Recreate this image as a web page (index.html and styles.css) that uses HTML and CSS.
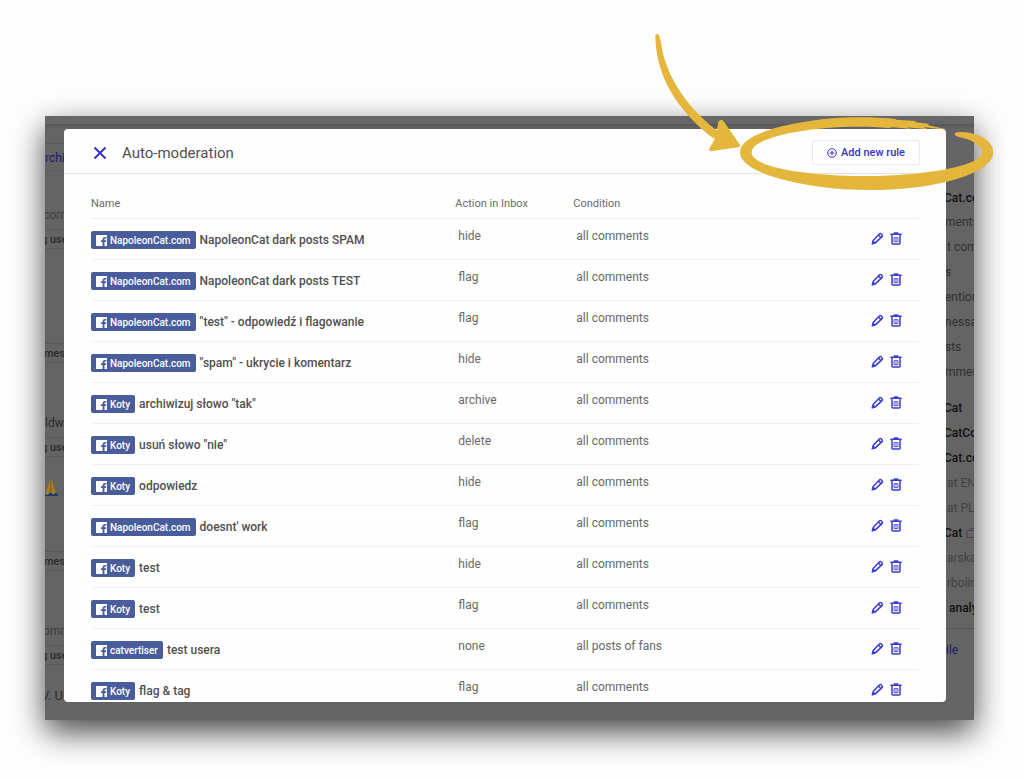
FILE: index.html
```html
<!DOCTYPE html>
<html lang="en">
<head>
<meta charset="utf-8">
<title>Auto-moderation</title>
<link rel="stylesheet" href="styles.css">
</head>
<body>
<svg class="sprites" aria-hidden="true">
  <symbol id="fb" viewBox="0 0 22 22"><path fill="#fff" d="M1 0h20a1 1 0 0 1 1 1v20a1 1 0 0 1-1 1h-4v-8h3l.5-3.400H17V9c0-1.200.4-1.800 1.800-1.800h2V4a20 20 0 0 0-2.800-.2c-2.800 0-4.800 1.600-4.800 4.800v2H10V14h3.200v8H1a1 1 0 0 1-1-1V1a1 1 0 0 1 1-1z"/></symbol>
  <symbol id="pen" viewBox="0 0 39 39"><g fill="none" stroke="#3c3ccd" stroke-width="4.500" stroke-linejoin="round"><path d="M4 35l3-10L25 6q3-3 6 0l2 2q3 3 0 6L14 32z"/><path d="M23 10l6 6"/></g><path fill="#3c3ccd" d="M2 37l4-12 9 8z"/></symbol>
  <symbol id="bin" viewBox="0 0 36 39"><g fill="none" stroke="#3c3ccd" stroke-width="4.500"><path d="M1 7h34M6 8v26q0 2 2 2h20q2 0 2-2V8"/></g><path fill="#3c3ccd" d="M11 1h14v6H11z"/><path fill="none" stroke="#3c3ccd" stroke-width="2.500" d="M12 17h12v12H12zM18 17v12"/></symbol>
</svg>
<div class="scene">
  <div class="window">
    <div class="strip strip-left" aria-hidden="true">
      <div class="crop toolbar link">rchiv</div>
      <div class="crop com">com</div>
      <div class="crop user">g user</div>
      <div class="crop mess">messa</div>
      <div class="crop name">ldwin</div>
      <div class="crop user2">g user</div>
      <div class="crop emoji"><svg width="13" height="18" viewBox="0 0 39 54"><path fill="#1e3972" d="M0 43l12-3 14-3 12 8v6H0z"/><path fill="#a47c26" d="M14 2q3-3 6 0l5 16 8 22-8 7-8-7-10 8-7-3q5-9 8-20z"/><path stroke="#67501b" stroke-width="2" fill="none" d="M17 5v34"/></svg></div>
      <div class="crop mess2">messa</div>
      <div class="crop comm">omm</div>
      <div class="crop user3">g user</div>
      <div class="crop sign">V. Ult</div>
    </div>
    <main class="modal">
      <header class="modal-head">
        <button class="close" aria-label="Close"><svg width="14" height="14" viewBox="0 0 14 14"><path d="M1.500 1.500l11 11m0-11l-11 11" stroke="#3434c8" stroke-width="2" fill="none"/></svg></button>
        <h1>Auto-moderation</h1>
        <button class="add"><svg width="10" height="10" viewBox="0 0 30 30"><g fill="none" stroke="#3434c8" stroke-width="3"><circle cx="15" cy="15" r="13"/><path d="M15 8v14M8 15h14"/></g></svg>Add new rule</button>
      </header>
      <div class="modal-body">
        <table>
          <colgroup><col class="c-name"><col class="c-action"><col><col class="c-tools"></colgroup>
          <thead><tr><th>Name</th><th>Action in Inbox</th><th>Condition</th><th></th></tr></thead>
          <tbody id="rules"></tbody>
        </table>
      </div>
    </main>
    <div class="strip strip-right" aria-hidden="true">
      <ul>
        <li class="strong first">Cat.com</li><li>ments</li><li class="in">t comments</li><li>s</li><li>entions</li><li>nessages</li><li>sts</li><li>mments</li>
      </ul>
      <ul>
        <li class="strong">Cat</li><li class="strong">CatCom</li><li class="strong">Cat.com</li><li class="dim">at EN</li><li class="dim">at PL</li>
        <li class="strong">Cat <svg width="13" height="10" viewBox="0 0 13 10"><path fill="none" stroke="#454545" d="M1 2.500h11v7H1zM4.500 2V.5h4V2"/></svg></li>
        <li class="dim">arska</li><li class="dim">rboliński</li><li class="strong wide">analytics</li>
      </ul>
      <div class="profile link">ile</div>
    </div>
  </div>
  <svg class="marker" width="370" height="190" viewBox="0 0 1110 570" aria-hidden="true">
    <g fill="#e4b73c">
      <path d="M46 46q5-9 11 0 5 14 7 28c12 82 65 178 166 257l5-25q8-12 16-2l50 72q2 5-5 6l-84 12q-7-1-4-9l17-28-16-10C94 253 47 152 46 46z"/>
      <path d="M944 343Q945 334 974 337C1022 342 1061 364 1060 399C1058 447 950 489 818 503C726 513 627 512 538 500C408 482 300 446 300 397C300 355 384 321 506 304C580 290 680 289 770 297L765 299L830 303L822 306L868 312L862 315L919 328L890 326L850 321L864 328L800 322L815 327L760 322L745 324C690 319 620 320 570 323C440 333 335 362 335 397C335 438 470 464 640 468C810 471 1023 444 1025 398C1025 378 1000 360 960 352Q946 349 944 343z"/>
    </g>
  </svg>
</div>
<script src="rules.js"></script>
</body>
</html>
```

FILE: rules.js
```js
const cat = "NapoleonCat.com";
const rules = [
  [cat, "NapoleonCat dark posts SPAM", "hide"],
  [cat, "NapoleonCat dark posts TEST", "flag"],
  [cat, "\"test\" - odpowiedź i flagowanie", "flag"],
  [cat, "\"spam\" - ukrycie i komentarz", "hide"],
  ["Koty", "archiwizuj słowo \"tak\"", "archive"],
  ["Koty", "usuń słowo \"nie\"", "delete"],
  ["Koty", "odpowiedz", "hide"],
  [cat, "doesnt' work", "flag"],
  ["Koty", "test", "hide"],
  ["Koty", "test", "flag"],
  ["catvertiser", "test usera", "none", "all posts of fans"],
  ["Koty", "flag &amp; tag", "flag"]
];
document.getElementById("rules").innerHTML = rules.map(([page, name, action, condition = "all comments"]) => `
  <tr>
    <td><div class="rule"><span class="badge"><svg width="11" height="11"><use href="#fb"/></svg>${page}</span><span>${name}</span></div></td>
    <td class="plain">${action}</td>
    <td class="plain">${condition}</td>
    <td><div class="tools"><button aria-label="Edit"><svg width="13" height="13"><use href="#pen"/></svg></button><button aria-label="Delete"><svg width="12" height="13"><use href="#bin"/></svg></button></div></td>
  </tr>`).join("");
```

FILE: styles.css
```css
* { box-sizing: border-box; }
body {
  margin: 0;
  background: #fefefe;
  font-family: Roboto, "Liberation Sans", sans-serif;
  font-size: 12px;
  color: #505050;
}
button { border: 0; padding: 0; background: none; font: inherit; cursor: pointer; }
svg { display: block; flex: none; }
.sprites { position: absolute; width: 0; height: 0; }
.scene {
  position: relative;
  height: 100vh;
  padding: 116px 50px 59px 45px;
  overflow: hidden;
}
.window {
  display: grid;
  grid-template-columns: 19px minmax(0, 1fr) 28px;
  grid-template-rows: minmax(0, 1fr);
  height: 100%;
  background: linear-gradient(#666 8px, #575757 8px, #5c5c5c 10px, #646464 13px);
  box-shadow: 0 12px 30px rgba(0, 0, 0, .72);
}
.strip { overflow: hidden; white-space: nowrap; color: #2b2b2b; }
.link { color: #1c1c70; }

.crop { height: 20px; line-height: 20px; }
.toolbar { height: 28px; line-height: 28px; margin-top: 27px; border-top: 1px solid #5a5a5a; border-bottom: 1px solid #5e5e5e; }
.com { margin-top: 34px; color: #3d3d3d; text-indent: -2px; }
.user, .user2, .user3, .mess, .mess2 { font-size: 11px; font-weight: 500; border-top: 1px solid #595959; border-bottom: 1px solid #5a5a5a; }
.user, .user2, .user3 { text-indent: -4px; }
.user { margin-top: 4px; }
.mess { margin-top: 94px; text-indent: -1px; }
.name { margin-top: 50px; }
.user2 { margin-top: 4px; }
.emoji { margin-top: 22px; }
.mess2 { margin-top: 52px; text-indent: -1px; }
.comm { margin-top: 50px; color: #3d3d3d; text-indent: -2px; }
.user3 { margin-top: 4px; }
.sign { margin-top: 21px; font-size: 13px; text-indent: -4px; }

.modal {
  display: flex;
  flex-direction: column;
  margin: 13px 0 18px;
  background: #fefefe;
  border-radius: 4px;
  overflow: hidden;
}
.modal-head {
  display: flex;
  align-items: center;
  flex: none;
  height: 45px;
  padding: 3px 26px 0 29px;
  border-bottom: 1px solid #e2e2e2;
}
.modal-head h1 { margin: 0 auto 0 15px; font-size: 15px; font-weight: 400; line-height: 20px; }
.add {
  display: flex;
  align-items: center;
  gap: 4px;
  height: 25px;
  padding: 0 14px;
  border: 1px solid #e8e8e8;
  border-radius: 2px;
  color: #3434c8;
  font-size: 11px;
  font-weight: 500;
}
.modal-body { flex: 1; min-height: 0; overflow: auto; scrollbar-width: none; padding: 14px 27px 0; }
table { width: 100%; table-layout: fixed; border-collapse: separate; border-spacing: 0; }
.c-name { width: 44%; }
.c-action { width: 118px; }
.c-tools { width: 50px; }
th { height: 31px; padding: 0; border-bottom: 1px solid #efefef; color: #6a6a6a; font-size: 11px; font-weight: 400; text-align: left; vertical-align: middle; }
td { height: 41px; padding: 2px 0 0; border-bottom: 1px solid #f1f1f1; vertical-align: middle; }
td.plain { padding: 0 0 6px 3px; color: #696969; }
.rule { display: flex; align-items: center; gap: 4px; font-weight: 500; white-space: nowrap; }
.badge {
  display: flex;
  align-items: center;
  gap: 3px;
  height: 18px;
  padding: 0 5px;
  border-radius: 2px;
  background: #495c9c;
  color: #fff;
  font-size: 10px;
}
.tools { display: flex; align-items: center; gap: 6px; height: 18px; margin-bottom: 4px; padding-left: 2px; }

.strip-right { padding-top: 70px; }
.strip-right ul { margin: 0 0 11px; padding: 0; list-style: none; }
.strip-right li { display: flex; gap: 4px; align-items: center; height: 25px; margin-left: -1px; color: #303030; }
.strip-right .strong { margin-left: -2px; color: #111; font-weight: 500; }
.strip-right .first { height: 23px; }
.strip-right .dim { margin-left: 1px; color: #424242; }
.strip-right .in { margin-left: 1px; }
.strip-right .wide { margin-left: 3px; }
.profile { margin-top: -3px; padding: 14px 0; border-top: 1px solid #565656; }
.marker { position: absolute; top: 20px; right: 14px; pointer-events: none; }
```
